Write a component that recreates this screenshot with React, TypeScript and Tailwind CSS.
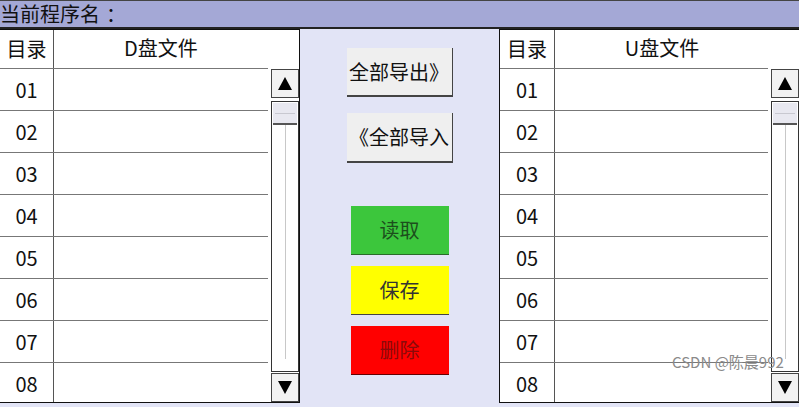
import React from "react";

const rows = ["01", "02", "03", "04", "05", "06", "07", "08"];

function Arrow({ up }: { up?: boolean }) {
  return (
    <div className="h-[29px] w-full bg-[#f2f2f2] border border-[#444] flex items-center justify-center">
      <svg width="16" height="15" viewBox="0 0 16 15">
        <polygon points={up ? "8,1 15,14 1,14" : "1,1 15,1 8,14"} fill="#000" />
      </svg>
    </div>
  );
}

function ScrollBar() {
  return (
    <div className="w-[28px] flex flex-col pt-[1px]">
      <Arrow up />
      <div className="flex-1 mt-[3px] mb-[1px] border border-[#333] bg-white flex flex-col items-center">
        <div className="w-[24px] h-[22px] mt-[1px] bg-[#e8e8f0] border-b-2 border-[#555] flex flex-col justify-center">
          <div className="h-[1px] bg-[#c8c8d0] mx-[2px]" />
        </div>
        <div className="flex-1 w-[1px] bg-[#c8c8c8] mb-[12px]" />
      </div>
      <Arrow />
    </div>
  );
}

function FilePanel({ title, side }: { title: string; side: "left" | "right" }) {
  const idCol = side === "left" ? "w-[54px]" : "w-[55px]";
  return (
    <div
      className={
        "w-[300px] h-[374px] bg-white border-t border-b border-[#111] flex flex-col overflow-hidden " +
        (side === "left" ? "border-r" : "border-l")
      }
    >
      <div className="h-[38px] flex shrink-0">
        <div className={idCol + " border-r border-[#555] flex items-center justify-center text-[20px]"}>
          目录
        </div>
        <div className="w-[214px] flex items-center justify-center text-[20px] pb-[2px]">{title}</div>
      </div>
      <div className="flex flex-1 min-h-0">
        <div className="w-[268px] flex flex-col border-t border-[#777]">
          {rows.map((r) => (
            <div key={r} className="h-[42px] shrink-0 flex border-b border-[#777]">
              <div className={idCol + " border-r border-[#555] flex items-center justify-center text-[20px]"}>
                {r}
              </div>
              <div className="flex-1" />
            </div>
          ))}
        </div>
        <div className="w-[3px]" />
        <ScrollBar />
      </div>
    </div>
  );
}

export default function App() {
  return (
    <div
      className="relative w-[799px] h-[407px] bg-[#e2e4f6] text-[#111] flex flex-col overflow-hidden"
      style={{ fontFamily: '"Noto Sans CJK SC", "Noto Sans", sans-serif' }}
    >
      <div className="h-[29px] shrink-0 bg-[#a4a8d6] border-t border-[#444] border-b-2 border-b-[#222] flex items-center text-[20px] leading-none">
        当前程序名<span className="ml-[6px]">：</span>
      </div>
      <div className="flex flex-1">
        <FilePanel title="D盘文件" side="left" />
        <div className="w-[199px] flex flex-col items-center pt-[19px]">
          <button className="w-[106px] h-[49px] bg-[#efefef] border-b-2 border-r border-[#444] text-[20px] leading-none">
            全部导出》
          </button>
          <button className="w-[106px] h-[50px] mt-[16px] bg-[#efefef] border-b-2 border-r border-[#444] text-[20px] leading-none">
            《全部导入
          </button>
          <button className="w-[98px] h-[49px] mt-[43px] bg-[#3cc63c] border-b border-[#2a6a2a] text-[20px] text-[#1c4f1c] leading-none">
            读取
          </button>
          <button className="w-[98px] h-[49px] mt-[11px] bg-[#ffff00] border-b border-[#444] text-[20px] text-[#333] leading-none">
            保存
          </button>
          <button className="w-[98px] h-[49px] mt-[11px] bg-[#ff0000] border-b border-[#600] text-[20px] text-[#8a0a0a] leading-none">
            删除
          </button>
        </div>
        <FilePanel title="U盘文件" side="right" />
      </div>
      <div className="absolute left-[672px] top-[354px] text-[15px] text-[#8a8a8a] leading-none whitespace-nowrap">
        CSDN @陈晨992
      </div>
    </div>
  );
}
